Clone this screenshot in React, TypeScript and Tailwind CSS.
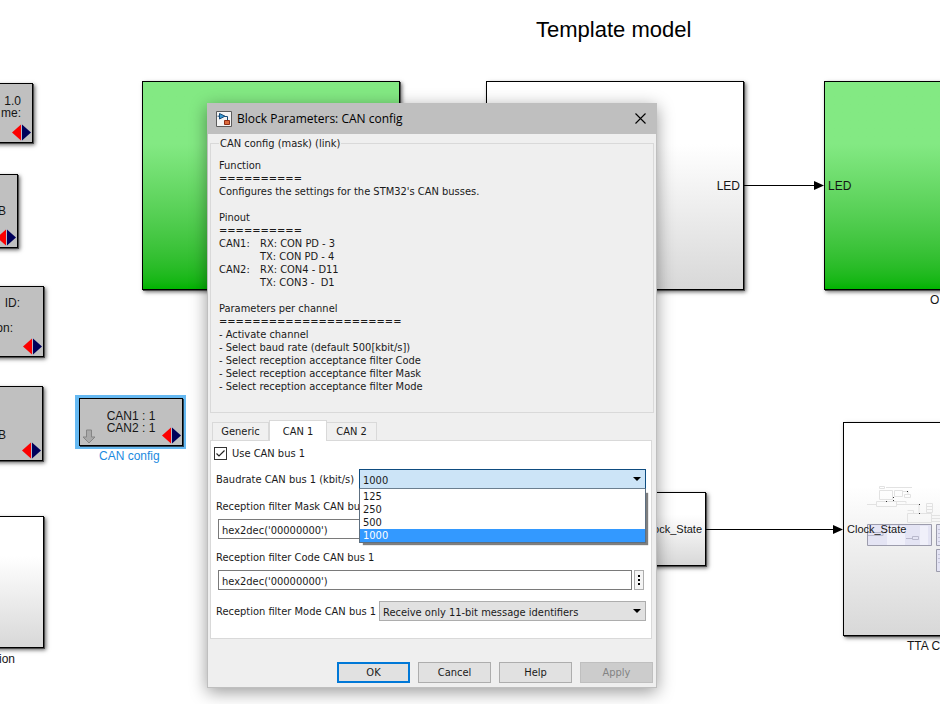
import { useState } from "react";
import type { ReactNode } from "react";

function PortMark() {
  return (
    <svg viewBox="0 0 19 17" className="absolute bottom-px right-px h-[17px] w-[19px]" aria-hidden="true">
      <path d="M9 0.500V16.500L0 8.500Z" fill="#fb0000" />
      <path d="M10 0.500V16.500L19 8.500Z" fill="#00005a" />
      <path d="M9.500 0V17" stroke="#b9b9c9" strokeWidth="1" />
    </svg>
  );
}

function Node({ className, children }: { className: string; children?: ReactNode }) {
  return (
    <div
      className={`absolute border border-black shadow-[1px_1px_0_#505050,2px_2px_4px_rgba(0,0,0,0.6)] ${className}`}
    >
      {children}
    </div>
  );
}

function Canvas() {
  return (
    <div className="absolute inset-0 overflow-hidden font-['Liberation_Sans',Arial,sans-serif] text-xs leading-3 text-[#151515]">
      <h1 className="absolute left-[536px] top-[18px] whitespace-nowrap text-[22px] leading-6 text-black">
        Template model
      </h1>

      <Node className="-left-10 top-[83px] h-[60px] w-[73px] bg-[#c0c0c0] pr-[11px] pt-[11px] text-right">
        <p>1.0</p>
        <p>me:</p>
        <PortMark />
      </Node>
      <Node className="-left-10 top-[174px] h-[74px] w-[58px] bg-[#c0c0c0] pr-[11px] pt-[30px] text-right">
        <p>B</p>
        <PortMark />
      </Node>
      <Node className="-left-10 top-[286px] h-[71px] w-[84px] bg-[#c0c0c0] pr-[23px] pt-[10px] text-right">
        <p>ID:</p>
        <p className="pr-[7px] pt-[13px]">on:</p>
        <PortMark />
      </Node>
      <Node className="-left-10 top-[386px] h-[75px] w-[83px] bg-[#c0c0c0] pr-[36px] pt-[42px] text-right">
        <p>B</p>
        <PortMark />
      </Node>
      <Node className="-left-10 top-[516px] h-[132px] w-[84px] bg-linear-to-b from-white from-30% to-[#d8d8d8]" />
      <p className="absolute left-[-1px] top-[653px]">ion</p>

      <div className="absolute left-[75px] top-[395px] w-[111px] bg-[#66b9f2] pb-[3px] pl-1 pr-[3px] pt-[3px]">
        <div className="relative h-12 border border-black bg-[#c0c0c0] pt-[11px] text-center shadow-[1px_1px_0_#2c4658]">
          <p>CAN1 : 1</p>
          <p>CAN2 : 1</p>
          <svg viewBox="0 0 14 15" className="absolute bottom-px left-[2px] h-[15px] w-[14px]" aria-hidden="true">
            <path d="M4.500 1H9.500V8H13L7 14L1 8H4.500Z" fill="#a9a9a9" stroke="#858585" />
          </svg>
          <PortMark />
        </div>
      </div>
      <p className="absolute left-[99px] top-[450px] whitespace-nowrap text-[#1b8ae0]">CAN config</p>

      <Node className="left-[142px] top-[81px] h-[209px] w-[258px] bg-linear-to-b from-[#83e983] from-30% to-[#00b400]" />
      <Node className="left-[486px] top-[81px] flex h-[209px] w-[258px] items-center justify-end bg-linear-to-b from-white from-30% to-[#d8d8d8] pr-[3px]">
        <span>LED</span>
      </Node>
      <Node className="left-[824px] top-[81px] flex h-[209px] w-[258px] items-center bg-linear-to-b from-[#83e983] from-30% to-[#00b400] pl-[3px]">
        <span>LED</span>
      </Node>
      <p className="absolute left-[930px] top-[294px]">O</p>

      <Node className="left-[560px] top-[492px] flex h-[74px] w-[146px] items-center justify-end bg-linear-to-b from-white from-30% to-[#d8d8d8] pr-[3px] text-[11px]">
        <span>Clock_State</span>
      </Node>
      <Node className="left-[843px] top-[422px] flex h-[214px] w-[240px] items-center bg-linear-to-b from-white from-30% to-[#d8d8d8] pl-[3px] text-[11px]">
        <svg viewBox="844 423 96 211" className="absolute left-0 top-0 h-[211px] w-[96px]" fill="none" aria-hidden="true">
          <g stroke="#e2e2e2" strokeWidth="1">
            <path d="M879.500 486.500h5v2h-5zM886 487.500h26M879.500 490.500h13v9h-13zM894.500 490.500h8v6h-8zM904.500 494.500h6v3h-6zM902 491.500h6v3" />
            <path d="M876.500 501.500h20v5h-20zM867 504.500h9M896 501.500h10v2M896 504.500h23v8M907.500 513.500h24v9h-24zM907.500 510.500h6v3M926.500 503.500h6v9h-6zM926 506.500h6M926 509.500h6M932 515.500h8M932 518.500h8M932 521.500h8" />
          </g>
          <g fill="#333">
            <path d="M893 497h1v1h-1zM893 500h1v1h-1zM886 501h1v1h-1zM919 504h1v1h-1zM919 513h1v1h-1zM907 491h1v1h-1z" />
          </g>
          <path d="M867.500 524.500h64v21h-64z" fill="#e4e4f4" stroke="#9c9cac" />
          <path d="M887 526h18v19h-18zM920 526h8v19h-8z" fill="#f0f0fa" />
          <path d="M868 532.500h15v3h-15M912.500 536.500h6v3h-6zM906 538.500h6M884 524v3" stroke="#b8b8cc" />
          <path d="M936.500 524.500h10v21h-10zM936.500 549.500h10v22h-10z" fill="#e4e4f4" stroke="#9c9cac" />
          <path d="M938 529.500h2M938 533.500h2M938 537.500h2M938 541.500h2M938 554.500h2M938 558.500h2M938 562.500h2" stroke="#c4c4d8" />
        </svg>
        <span className="relative">Clock_State</span>
      </Node>
      <p className="absolute left-[907px] top-[640px] whitespace-nowrap">TTA C</p>

      <svg viewBox="0 0 80 10" className="absolute left-[744px] top-[180px] h-[10px] w-[80px]" aria-hidden="true">
        <path d="M0 5.500H71" stroke="#000" />
        <path d="M70 1V10L80 5.500Z" fill="#000" />
      </svg>
      <svg viewBox="0 0 137 10" className="absolute left-[706px] top-[524px] h-[10px] w-[137px]" aria-hidden="true">
        <path d="M0 5.500H128" stroke="#000" />
        <path d="M127 1V10L137 5.500Z" fill="#000" />
      </svg>
    </div>
  );
}

function DropArrow() {
  return (
    <svg
      viewBox="0 0 8 4"
      className="pointer-events-none absolute right-[5px] top-[8px] h-1 w-2"
      aria-hidden="true"
    >
      <path d="M0 0H8L4 4Z" fill="#000" />
    </svg>
  );
}

const pinout = [
  ["CAN1:", "RX: CON PD - 3"],
  ["", "TX: CON PD - 4"],
  ["CAN2:", "RX: CON4 - D11"],
  ["", "TX: CON3 -  D1"],
];

function Description() {
  return (
    <fieldset className="ml-[2px] mr-[2px] h-[276px] border border-[#d9d9d9] px-2">
      <legend className="px-px leading-[13px]">CAN config (mask) (link)</legend>
      <div className="whitespace-pre pt-[9px]">
        <p>Function</p>
        <p>==========</p>
        <p>Configures the settings for the STM32's CAN busses.</p>
        <p className="pt-[13px]">Pinout</p>
        <p>==========</p>
        {pinout.map(([bus, pin]) => (
          <div key={pin} className="flex">
            <span className="w-[41px]">{bus}</span>
            <span>{pin}</span>
          </div>
        ))}
        <p className="pt-[13px]">Parameters per channel</p>
        <p>======================</p>
        <p>- Activate channel</p>
        <p>- Select baud rate (default 500[kbit/s])</p>
        <p>- Select reception acceptance filter Code</p>
        <p>- Select reception acceptance filter Mask</p>
        <p>- Select reception acceptance filter Mode</p>
      </div>
    </fieldset>
  );
}

function FilterField({ id, label }: { id: string; label: string }) {
  const [value, setValue] = useState("hex2dec('00000000')");
  return (
    <div>
      <label htmlFor={id} className="block pl-[5px]">
        {label}
      </label>
      <div className="mt-[6px] flex gap-[2px] px-[7px]">
        <input
          id={id}
          value={value}
          onChange={(e) => setValue(e.target.value)}
          className="h-5 min-w-0 grow border border-[#7a7a7a] bg-white px-[3px] pt-[2px] outline-none"
        />
        <button
          type="button"
          aria-label="More options"
          className="flex h-5 w-[10px] flex-col items-center justify-center gap-[2px] border border-[#adadad] bg-[#f4f4f4]"
        >
          <span className="size-[2px] bg-black" />
          <span className="size-[2px] bg-black" />
          <span className="size-[2px] bg-black" />
        </button>
      </div>
    </div>
  );
}

const rates = ["125", "250", "500", "1000"];

function Dialog() {
  const [rate, setRate] = useState("1000");
  const [used, setUsed] = useState(true);
  return (
    <section
      role="dialog"
      aria-labelledby="dialog-title"
      className="absolute left-[207px] top-[103px] w-[450px] border border-[#bfbfbf] bg-[#efefef] pb-1 font-['DejaVu_Sans_Condensed','DejaVu_Sans',sans-serif] text-[11px] leading-[13px] text-[#1a1a1a] shadow-[0_4px_16px_rgba(0,0,0,0.4)]"
    >
      <header className="flex h-[30px] items-center bg-[#bfbfbf] pl-2 pr-[9px]">
        <svg viewBox="0 0 16 16" className="size-4" aria-hidden="true">
          <path d="M0.500 0.500H15.500V15.500H0.500Z" fill="#f4f4f4" stroke="#5c5c5c" />
          <path d="M1.500 5.200H3.500M8 5.500H11.500V9" fill="none" stroke="#174a78" />
          <path d="M3.500 2.500V8L9 5.200Z" fill="#3a9ad2" stroke="#174a78" />
          <path d="M8.500 9.500H13.500V13.500H8.500Z" fill="#dc6a3c" stroke="#8c2c14" />
        </svg>
        <h2 id="dialog-title" className="grow pl-[5px] font-['Open_Sans',sans-serif] text-xs leading-4 text-black">
          Block Parameters: CAN config
        </h2>
        <button type="button" aria-label="Close" className="px-px pb-[2px]">
          <svg viewBox="0 0 11 11" className="size-[11px]" aria-hidden="true">
            <path d="M0.500 0.500L10.500 10.500M10.500 0.500L0.500 10.500" stroke="#000" strokeWidth="1.100" />
          </svg>
        </button>
      </header>

      <div className="pt-[3px]">
        <Description />

        <div role="tablist" className="flex items-end pl-1 pt-[7px]">
          <button role="tab" aria-selected="false" type="button" className="h-[18px] w-[57px] border border-b-0 border-[#d9d9d9] bg-[#f0f0f0]">
            Generic
          </button>
          <button role="tab" aria-selected="true" type="button" className="relative z-10 -mb-px h-[21px] w-[58px] border border-b-0 border-[#d9d9d9] bg-white">
            CAN 1
          </button>
          <button role="tab" aria-selected="false" type="button" className="h-[18px] w-[50px] border border-b-0 border-l-0 border-[#d9d9d9] bg-[#f0f0f0]">
            CAN 2
          </button>
        </div>

        <div role="tabpanel" className="ml-[2px] mr-1 border border-[#d9d9d9] bg-white pb-[17px] pt-[6px]">
          <label className="flex items-center gap-[5px] pl-[3px]">
            <span className="relative flex">
              <input
                type="checkbox"
                checked={used}
                onChange={(e) => setUsed(e.target.checked)}
                className="peer size-[13px] appearance-none border border-[#333] bg-white"
              />
              <svg viewBox="0 0 13 13" className="pointer-events-none absolute inset-0 hidden size-[13px] peer-checked:block" fill="none" aria-hidden="true">
                <path d="M2.500 6.500L5 9L10.500 3.500" stroke="#222" strokeWidth="1.200" />
              </svg>
            </span>
            Use CAN bus 1
          </label>

          <div className="mt-[9px] flex items-center px-[5px]">
            <label htmlFor="baud" className="w-[143px] whitespace-nowrap">
              Baudrate CAN bus 1 (kbit/s)
            </label>
            <div className="relative min-w-0 grow">
              <select
                id="baud"
                value={rate}
                onChange={(e) => setRate(e.target.value)}
                className="block h-5 w-full appearance-none border border-[#0e4c80] border-b-[#6b7f90] bg-[#cce4f7] pl-[3px] pt-[3px] outline-none"
              >
                {rates.map((r) => (
                  <option key={r}>{r}</option>
                ))}
              </select>
              <DropArrow />
              <ul
                role="listbox"
                aria-label="Baudrate"
                className="absolute inset-x-0 top-full z-20 border-x border-b border-[#5d6f80] bg-white pt-px shadow-[3px_3px_1px_-1px_rgba(0,0,0,0.5)]"
              >
                {rates.map((r) => (
                  <li
                    key={r}
                    role="option"
                    aria-selected={r === rate}
                    onClick={() => setRate(r)}
                    className="pl-[3px] aria-selected:bg-[#3399ff] aria-selected:text-white"
                  >
                    {r}
                  </li>
                ))}
              </ul>
            </div>
          </div>

          <div className="mt-[11px] flex flex-col gap-3">
            <FilterField id="mask" label="Reception filter Mask CAN bus 1" />
            <FilterField id="code" label="Reception filter Code CAN bus 1" />
          </div>

          <div className="mt-[11px] flex items-center px-[5px]">
            <label htmlFor="mode" className="w-[163px] whitespace-nowrap">
              Reception filter Mode CAN bus 1
            </label>
            <div className="relative min-w-0 grow">
              <select
                id="mode"
                className="block h-5 w-full appearance-none border border-[#adadad] bg-[#e1e1e1] pl-[3px] pt-[3px]"
              >
                <option>Receive only 11-bit message identifiers</option>
              </select>
              <DropArrow />
            </div>
          </div>
        </div>

        <footer className="flex justify-end gap-2 pr-[3px] pt-[23px]">
          <button type="button" className="h-[21px] w-[73px] border-2 border-[#0078d7] bg-[#e1e1e1]">
            OK
          </button>
          <button type="button" className="h-[21px] w-[73px] border border-[#adadad] bg-[#e1e1e1]">
            Cancel
          </button>
          <button type="button" className="h-[21px] w-[73px] border border-[#adadad] bg-[#e1e1e1]">
            Help
          </button>
          <button type="button" disabled className="h-[21px] w-[73px] border border-[#bfbfbf] bg-[#cccccc] text-[#838383]">
            Apply
          </button>
        </footer>
      </div>
    </section>
  );
}

export default function App() {
  return (
    <main className="relative min-h-screen overflow-hidden bg-white">
      <Canvas />
      <Dialog />
    </main>
  );
}
